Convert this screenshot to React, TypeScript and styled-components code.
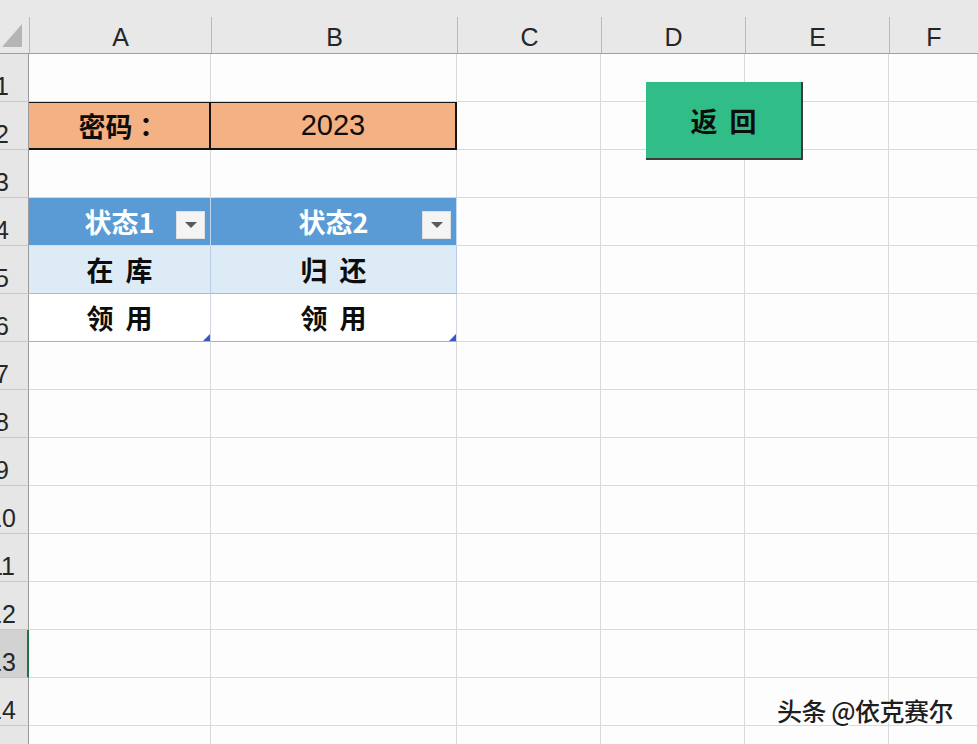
import React from "react";
import styled, { createGlobalStyle, css } from "styled-components";

const GlobalStyle = createGlobalStyle`
  html, body {
    margin: 0;
    padding: 0;
    background: #fdfdfd;
    overflow: hidden;
  }
`;

const COLS = ["A", "B", "C", "D", "E", "F"];
const ROW_COUNT = 15;
const SELECTED_ROW = 13;

const Sheet = styled.div`
  position: relative;
  width: 978px;
  height: 744px;
  overflow: hidden;
  background: #fdfdfd;
  font-family: "Liberation Sans", Arial, sans-serif;
`;

const Grid = styled.div`
  display: grid;
  grid-template-columns: 29px 182px 246px 144px 144px 144px 89px;
  grid-template-rows: 54px repeat(${ROW_COUNT}, 48px);
`;

const Corner = styled.div`
  background: #e8e8e8;
  border-bottom: 1px solid #9e9e9e;
  display: flex;
  align-items: flex-end;
  padding: 0 0 6px 2px;
  box-sizing: border-box;
`;

const ColHead = styled.div`
  background: #e8e8e8;
  border-bottom: 1px solid #9e9e9e;
  display: flex;
  align-items: flex-end;
  box-sizing: border-box;
`;

const ColLabel = styled.div`
  flex: 1;
  height: 36px;
  border-left: 1px solid #b9b9b9;
  display: flex;
  align-items: flex-end;
  justify-content: center;
  padding-bottom: 3px;
  box-sizing: border-box;
  font-size: 25px;
  line-height: 1;
  color: #262626;
`;

const RowHead = styled.div<{ $selected?: boolean }>`
  background: ${(p) => (p.$selected ? "#d2d2d2" : "#e6e6e6")};
  border-bottom: 1px solid #c8c8c8;
  border-right: ${(p) => (p.$selected ? "2px solid #217346" : "1px solid #9a9a9a")};
  box-sizing: border-box;
  overflow: hidden;
  display: flex;
  align-items: flex-end;
  padding-bottom: 2px;
`;

const RowNum = styled.span`
  flex: none;
  width: 40px;
  margin-left: -18px;
  text-align: center;
  font-size: 25px;
  line-height: 1;
  color: #262626;
`;

type Variant = "plain" | "pwd" | "thead" | "band" | "row";

const variants: Record<Variant, ReturnType<typeof css>> = {
  plain: css``,
  pwd: css`
    background: #f4b183;
    border-right: 2px solid #151515;
    border-bottom: 2px solid #151515;
    box-shadow: inset 0 1px 0 #151515;
  `,
  thead: css`
    background: #5b9bd5;
    color: #ffffff;
    border-right: 1px solid #c3d9ef;
    border-bottom: 1px solid #cfe0f1;
  `,
  band: css`
    background: #ddebf7;
    border-right: 1px solid #b9cde4;
    border-bottom: 1px solid #9bc2e6;
  `,
  row: css`
    background: #ffffff;
    border-right: 1px solid #cfd6de;
    border-bottom: 1px solid #8fb6e0;
  `,
};

const Cell = styled.div<{ $variant: Variant; $latin?: boolean }>`
  position: relative;
  box-sizing: border-box;
  border-right: 1px solid #d9d9d9;
  border-bottom: 1px solid #d9d9d9;
  display: flex;
  align-items: center;
  justify-content: center;
  color: #0d0d0d;
  font-family: ${(p) =>
    p.$latin
      ? `"Liberation Sans", Arial, sans-serif`
      : `"Noto Sans CJK SC", "Noto Sans", sans-serif`};
  font-size: ${(p) => (p.$latin ? "29px" : "27px")};
  font-weight: ${(p) => (p.$latin ? 400 : 700)};
  word-spacing: 6px;
  ${(p) => variants[p.$variant]}
`;

/* full-width colon drawn centred in its box, as the sheet's font does */
const Colon = styled.span`
  font-family: "Noto Sans CJK TC", "Noto Sans CJK SC", sans-serif;
`;

const DropBtn = styled.span`
  position: absolute;
  right: 5px;
  top: 13px;
  width: 29px;
  height: 28px;
  background: #f4f4f4;
  border: 1px solid #e0e0e0;
  box-sizing: border-box;
  display: flex;
  align-items: center;
  justify-content: center;

  &::after {
    content: "";
    border-left: 6px solid transparent;
    border-right: 6px solid transparent;
    border-top: 6px solid #5a5a5a;
  }
`;

const ResizeHandle = styled.span`
  position: absolute;
  right: 0;
  bottom: 0;
  width: 0;
  height: 0;
  border-left: 7px solid transparent;
  border-bottom: 7px solid #3558c8;
`;

const ReturnButton = styled.button`
  position: absolute;
  left: 646px;
  top: 82px;
  width: 157px;
  height: 78px;
  padding: 0;
  background: #31bd88;
  border: none;
  border-right: 2px solid #3c3c3c;
  border-bottom: 2px solid #3c3c3c;
  font-family: "Noto Sans CJK SC", "Noto Sans", sans-serif;
  font-size: 27px;
  font-weight: 700;
  word-spacing: 6px;
  color: #0d0d0d;
  cursor: pointer;
`;

const Watermark = styled.div`
  position: absolute;
  left: 777px;
  top: 692px;
  font-family: "Noto Sans CJK SC", "Noto Sans", sans-serif;
  font-size: 25px;
  font-weight: 500;
  letter-spacing: -0.5px;
  color: #1e1e1e;
  text-shadow: 1px 1px 0 #ffffff, -1px 0 0 #ffffff;
  white-space: nowrap;
`;

type CellData = {
  text?: React.ReactNode;
  variant: Variant;
  latin?: boolean;
  drop?: boolean;
  handle?: boolean;
};

const tableCells: Record<number, CellData[]> = {
  2: [
    {
      text: (
        <>
          密码<Colon>：</Colon>
        </>
      ),
      variant: "pwd",
    },
    { text: "2023", variant: "pwd", latin: true },
  ],
  4: [
    { text: "状态1", variant: "thead", drop: true },
    { text: "状态2", variant: "thead", drop: true },
  ],
  5: [
    { text: "在 库", variant: "band" },
    { text: "归 还", variant: "band" },
  ],
  6: [
    { text: "领 用", variant: "row", handle: true },
    { text: "领 用", variant: "row", handle: true },
  ],
};

const cellFor = (row: number, col: number): CellData => {
  const data = tableCells[row];
  if (data && col < data.length) return data[col];
  return { variant: "plain" };
};

const App: React.FC = () => {
  const rows = Array.from({ length: ROW_COUNT }, (_, i) => i + 1);

  return (
    <Sheet>
      <GlobalStyle />
      <Grid>
        <Corner>
          <svg width="20" height="23" viewBox="0 0 20 23">
            <polygon points="20,0 20,23 0,23" fill="#b5b5b5" />
          </svg>
        </Corner>
        {COLS.map((c) => (
          <ColHead key={c}>
            <ColLabel>{c}</ColLabel>
          </ColHead>
        ))}

        {rows.map((r) => (
          <React.Fragment key={r}>
            <RowHead $selected={r === SELECTED_ROW}>
              <RowNum>{r}</RowNum>
            </RowHead>
            {COLS.map((c, ci) => {
              const d = cellFor(r, ci);
              return (
                <Cell key={c} $variant={d.variant} $latin={d.latin}>
                  {d.text}
                  {d.drop && <DropBtn />}
                  {d.handle && <ResizeHandle />}
                </Cell>
              );
            })}
          </React.Fragment>
        ))}
      </Grid>

      <ReturnButton>返 回</ReturnButton>
      <Watermark>头条 @依克赛尔</Watermark>
    </Sheet>
  );
};

export default App;
